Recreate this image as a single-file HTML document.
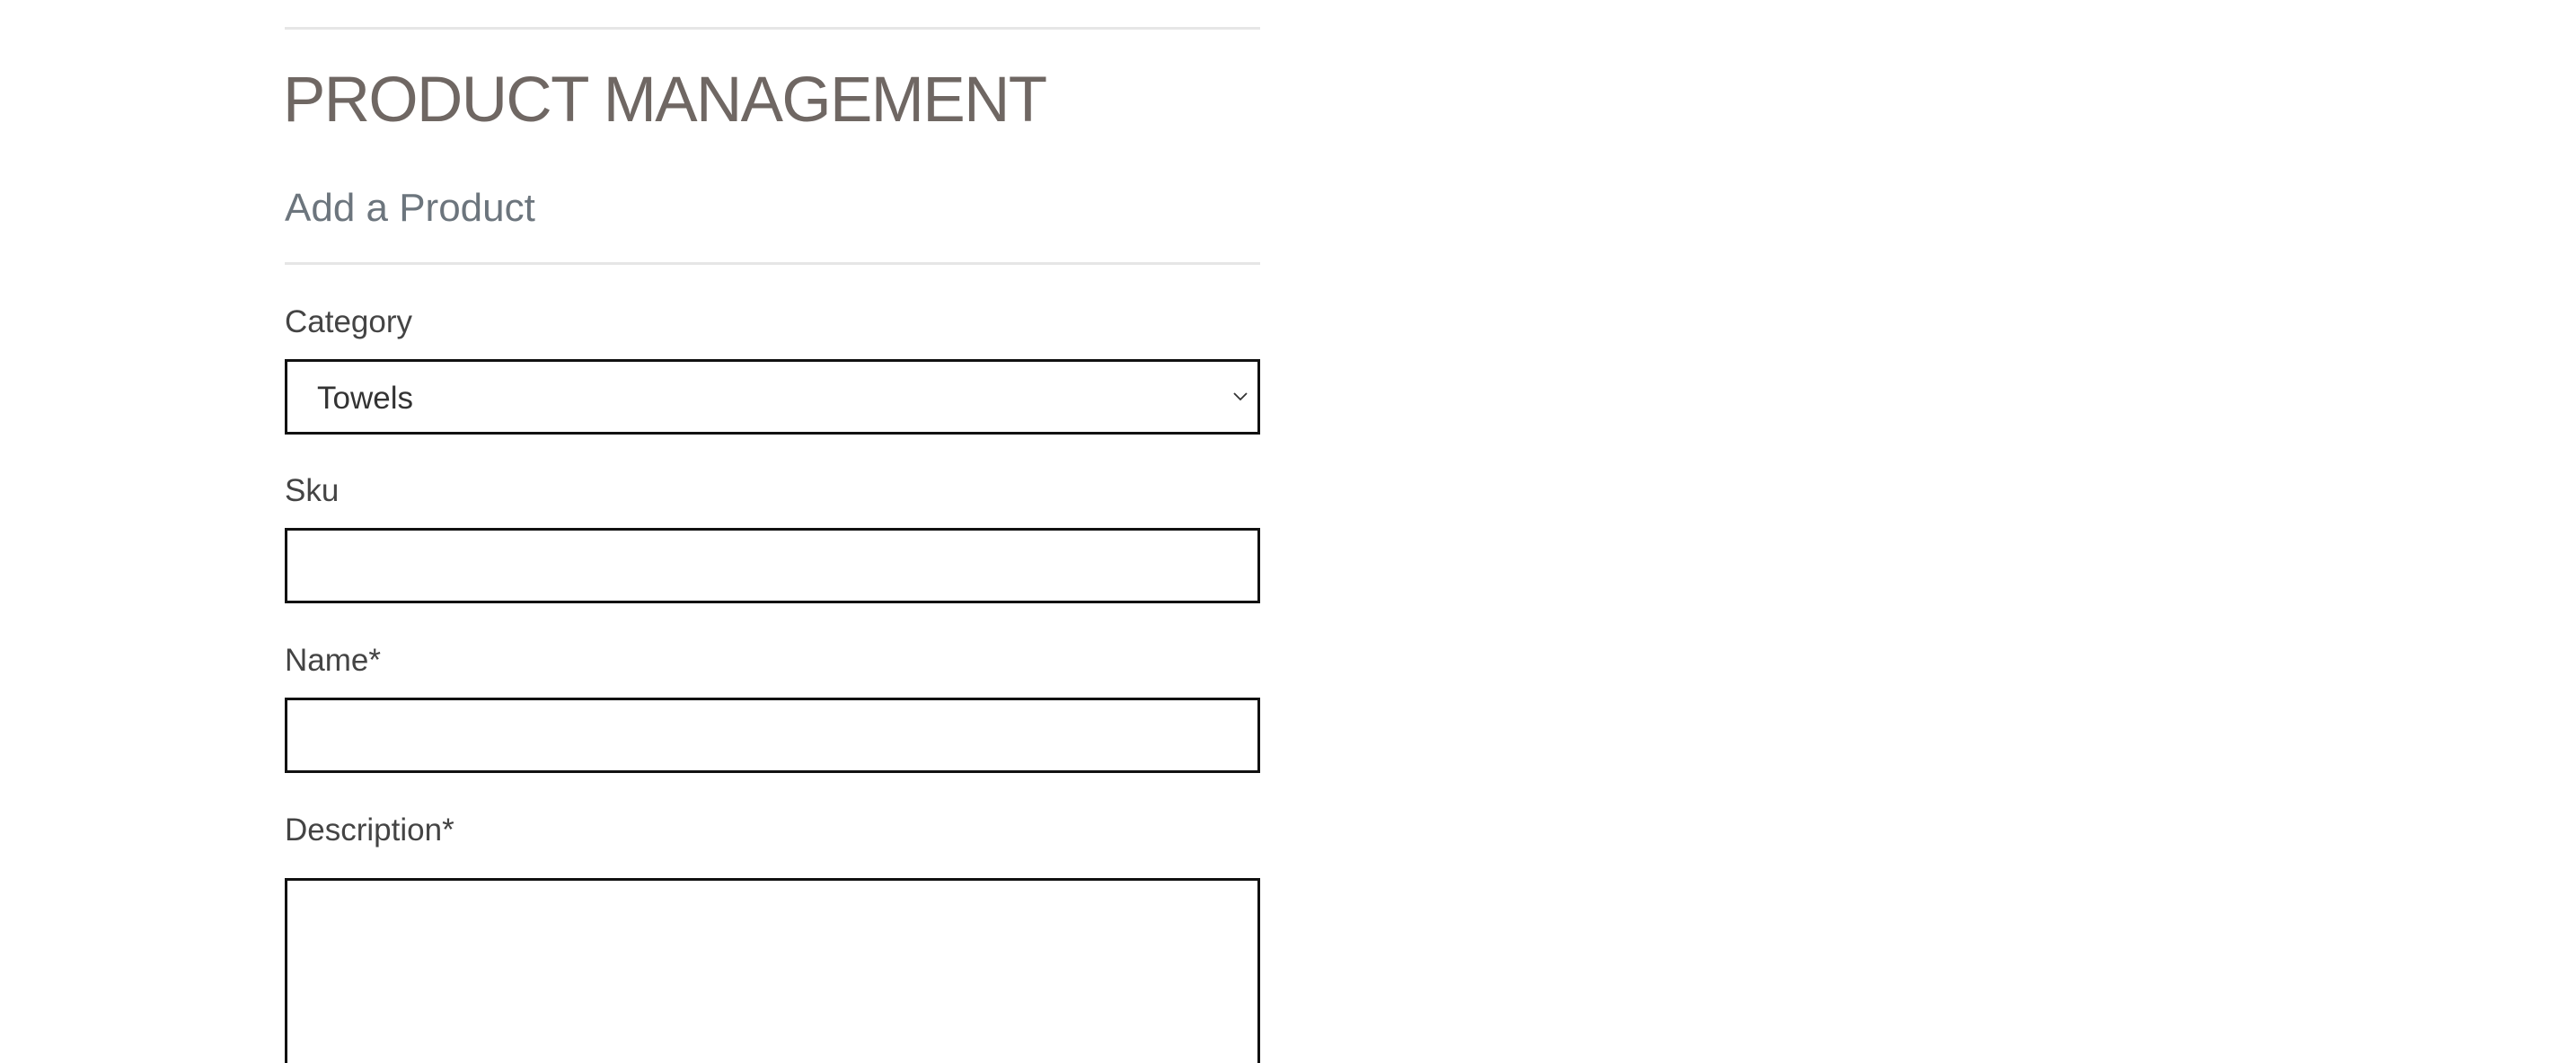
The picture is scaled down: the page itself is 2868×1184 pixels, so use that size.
<!DOCTYPE html>
<html><head><meta charset="utf-8"><style>
html,body{margin:0;padding:0;background:#fff;width:2868px;height:1184px;overflow:hidden;font-family:"Liberation Sans",sans-serif}
body{position:relative}
.a{position:absolute}
.hr{left:317px;width:1086px;height:3px;background:#e6e6e6}
.lbl{left:317px;font-size:35px;color:#444;line-height:1;white-space:nowrap}
.box{left:317px;width:1086px;box-sizing:border-box;border:3px solid #111;background:#fff}
</style></head><body>
<div class="a hr" style="top:30px"></div>
<div class="a" style="left:315px;top:76px;font-size:71px;line-height:1;color:#6f6763;white-space:nowrap;letter-spacing:-1.6px">PRODUCT MANAGEMENT</div>
<div class="a" style="left:317px;top:210px;font-size:44px;line-height:1;color:#6c757d;white-space:nowrap">Add a Product</div>
<div class="a hr" style="top:292px"></div>
<div class="a lbl" style="top:341px">Category</div>
<div class="a box" style="top:400px;height:84px"></div>
<div class="a" style="left:353px;top:426px;font-size:35px;line-height:1;color:#333">Towels</div>
<svg class="a" style="left:1373px;top:436px" width="16" height="12" viewBox="0 0 16 12"><path d="M1 2 L8 9 L15 2" fill="none" stroke="#333" stroke-width="1.8"/></svg>
<div class="a lbl" style="top:529px">Sku</div>
<div class="a box" style="top:588px;height:84px"></div>
<div class="a lbl" style="top:718px">Name*</div>
<div class="a box" style="top:777px;height:84px"></div>
<div class="a lbl" style="top:907px">Description*</div>
<div class="a box" style="top:978px;height:206px;border-bottom:none"></div>
</body></html>
